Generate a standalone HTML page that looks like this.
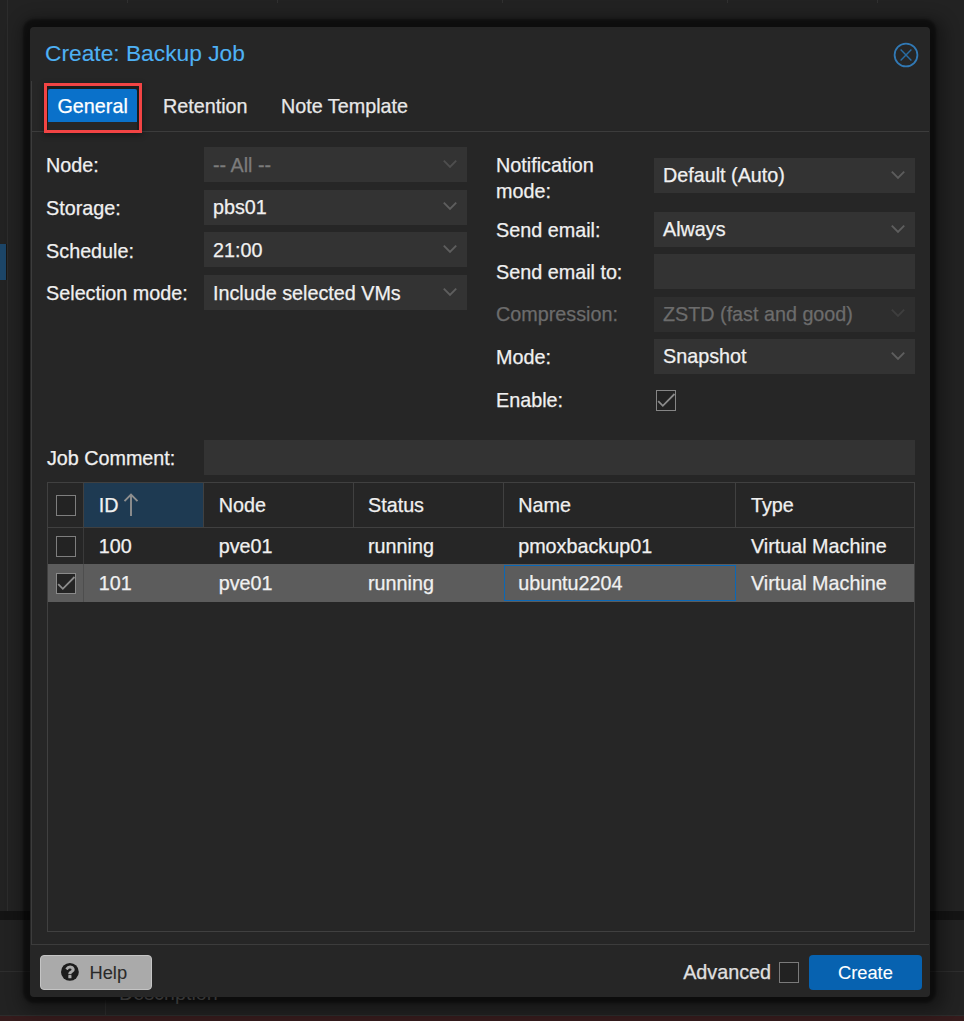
<!DOCTYPE html>
<html><head><meta charset="utf-8">
<style>
*{margin:0;padding:0;box-sizing:border-box}
html,body{width:964px;height:1021px;overflow:hidden;background:#222222;font-family:"Liberation Sans",sans-serif;}
.a{position:absolute}
svg.a{overflow:visible}
.t{position:absolute;font-size:19.75px;line-height:20px;color:#f0f0f0;white-space:nowrap;-webkit-text-stroke:0.25px currentColor}
</style></head><body>
<div class="a" style="left:7px;top:0px;width:1px;height:911px;background:#2c2c2c;"></div>
<div class="a" style="left:0px;top:244px;width:6px;height:36px;background:#1c4567;"></div>
<div class="a" style="left:6px;top:244px;width:1px;height:36px;background:#161616;"></div>
<div class="a" style="left:127px;top:0px;width:1px;height:3px;background:#303030;"></div>
<div class="a" style="left:277px;top:0px;width:1px;height:3px;background:#303030;"></div>
<div class="a" style="left:502px;top:0px;width:1px;height:3px;background:#303030;"></div>
<div class="a" style="left:727px;top:0px;width:1px;height:3px;background:#303030;"></div>
<div class="a" style="left:877px;top:0px;width:1px;height:3px;background:#303030;"></div>
<div class="a" style="left:0px;top:911px;width:964px;height:9px;background:#141414;"></div>
<div class="a" style="left:0px;top:971px;width:964px;height:1px;background:#2e2e2e;"></div>
<div class="a" style="left:105px;top:1000px;width:1px;height:16px;background:#2c2c2c;"></div>
<div class="a" style="left:0px;top:1015px;width:964px;height:1px;background:#2c2c2c;"></div>
<div class="a" style="left:0px;top:1016px;width:964px;height:5px;background:#351b1c;"></div>
<div class="a" style="left:30px;top:27px;width:900px;height:970px;border-radius:5px;box-shadow:-0.5px -1px 2.5px 6.5px rgba(0,0,0,0.45),3px 3px 16px 12px rgba(0,0,0,0.32)"></div>
<div class="t" style="left:119px;top:983px;color:#363636;-webkit-text-stroke:0">Description</div>
<div class="a" style="left:30px;top:27px;width:900px;height:970px;background:#262626;border-radius:4px"></div>
<div class="t" style="left:45px;top:41.6px;color:#4eb1f4;font-size:22.75px;line-height:23px;-webkit-text-stroke:0.1px #4eb1f4">Create: Backup Job</div>
<svg class="a" style="left:893px;top:42px" width="26" height="26" viewBox="0 0 26 26">
<circle cx="13" cy="13" r="11.4" fill="none" stroke="#3179b5" stroke-width="1.8"/>
<path d="M7.6 7.6 L18.4 18.4 M18.4 7.6 L7.6 18.4" fill="none" stroke="#286ca3" stroke-width="1.45"/>
</svg>
<div class="a" style="left:31px;top:81px;width:1px;height:864px;background:#3c3c3c;"></div>
<div class="a" style="left:31px;top:131px;width:898px;height:1px;background:#3c3c3c;"></div>
<div class="a" style="left:31px;top:944px;width:898px;height:1px;background:#3c3c3c;"></div>
<div class="a" style="left:44px;top:83px;width:98px;height:50px;border:3px solid #f24444;background:#1c1c1c;box-shadow:0 2px 6px rgba(0,0,0,0.4)"></div>
<div class="a" style="left:48px;top:89px;width:89px;height:41px;background:#262626;"></div>
<div class="a" style="left:48px;top:89px;width:89px;height:33px;background:#0a71ca;border-radius:2px 2px 0 0"></div>
<div class="t" style="left:57.5px;top:96px;color:#ffffff">General</div>
<div class="t" style="left:163px;top:96px;color:#e8e8e8">Retention</div>
<div class="t" style="left:281px;top:96px;color:#e8e8e8">Note Template</div>
<div class="a" style="left:204px;top:147px;width:263px;height:35px;background:#333333;"></div>
<div class="t" style="left:46.1px;top:155.2px">Node:</div>
<div class="t" style="left:213px;top:154.6px;color:#7c7c7c">-- All --</div>
<svg class="a" style="left:441.5px;top:157.7px" width="16" height="12" viewBox="0 0 16 12"><path d="M1.8 2.6 L8 8.8 L14.2 2.6" fill="none" stroke="#4e4e4e" stroke-width="1.9"/></svg>
<div class="a" style="left:204px;top:189.67px;width:263px;height:35px;background:#333333;"></div>
<div class="t" style="left:46.1px;top:197.86999999999998px">Storage:</div>
<div class="t" style="left:213px;top:197.26999999999998px">pbs01</div>
<svg class="a" style="left:441.5px;top:200.36999999999998px" width="16" height="12" viewBox="0 0 16 12"><path d="M1.8 2.6 L8 8.8 L14.2 2.6" fill="none" stroke="#5e5e5e" stroke-width="1.9"/></svg>
<div class="a" style="left:204px;top:232.33px;width:263px;height:35px;background:#333333;"></div>
<div class="t" style="left:46.1px;top:240.53px">Schedule:</div>
<div class="t" style="left:213px;top:239.93px">21:00</div>
<svg class="a" style="left:441.5px;top:243.03px" width="16" height="12" viewBox="0 0 16 12"><path d="M1.8 2.6 L8 8.8 L14.2 2.6" fill="none" stroke="#5e5e5e" stroke-width="1.9"/></svg>
<div class="a" style="left:204px;top:275px;width:263px;height:35px;background:#333333;"></div>
<div class="t" style="left:46.1px;top:283.2px">Selection mode:</div>
<div class="t" style="left:213px;top:282.6px">Include selected VMs</div>
<svg class="a" style="left:441.5px;top:285.7px" width="16" height="12" viewBox="0 0 16 12"><path d="M1.8 2.6 L8 8.8 L14.2 2.6" fill="none" stroke="#5e5e5e" stroke-width="1.9"/></svg>
<div class="t" style="left:496.1px;top:155px">Notification</div>
<div class="t" style="left:496.1px;top:180.8px">mode:</div>
<div class="a" style="left:654px;top:158px;width:261px;height:35px;background:#333333;"></div>
<div class="t" style="left:663px;top:165.3px">Default (Auto)</div>
<svg class="a" style="left:889.5px;top:168.7px" width="16" height="12" viewBox="0 0 16 12"><path d="M1.8 2.6 L8 8.8 L14.2 2.6" fill="none" stroke="#5c5c5c" stroke-width="1.9"/></svg>
<div class="a" style="left:654px;top:212px;width:261px;height:35px;background:#333333;"></div>
<div class="t" style="left:496.1px;top:219.5px">Send email:</div>
<div class="t" style="left:663px;top:219.0px">Always</div>
<svg class="a" style="left:889.5px;top:222.7px" width="16" height="12" viewBox="0 0 16 12"><path d="M1.8 2.6 L8 8.8 L14.2 2.6" fill="none" stroke="#5e5e5e" stroke-width="1.9"/></svg>
<div class="a" style="left:654px;top:254.33px;width:261px;height:35px;background:#333333;"></div>
<div class="t" style="left:496.1px;top:261.83000000000004px">Send email to:</div>
<div class="a" style="left:654px;top:296.67px;width:261px;height:35px;background:#2e2e2e;"></div>
<div class="t" style="left:496.1px;top:304.17px;color:#6c6c6c">Compression:</div>
<div class="t" style="left:663px;top:303.67px;color:#6c6c6c">ZSTD (fast and good)</div>
<svg class="a" style="left:889.5px;top:307.37px" width="16" height="12" viewBox="0 0 16 12"><path d="M1.8 2.6 L8 8.8 L14.2 2.6" fill="none" stroke="#3e3e3e" stroke-width="1.9"/></svg>
<div class="a" style="left:654px;top:339px;width:261px;height:35px;background:#333333;"></div>
<div class="t" style="left:496.1px;top:346.5px">Mode:</div>
<div class="t" style="left:663px;top:346.0px">Snapshot</div>
<svg class="a" style="left:889.5px;top:349.7px" width="16" height="12" viewBox="0 0 16 12"><path d="M1.8 2.6 L8 8.8 L14.2 2.6" fill="none" stroke="#5e5e5e" stroke-width="1.9"/></svg>
<div class="t" style="left:496.1px;top:389.7px">Enable:</div>
<div class="a" style="left:655.5px;top:390px;width:20px;height:21px;border:1.5px solid #858585;background:#222222"></div>
<svg class="a" style="left:655.5px;top:390px" width="21" height="21" viewBox="0 0 21 21"><path d="M2.2 11.2 L6.8 15.8 L18.5 4" fill="none" stroke="#8a8a8a" stroke-width="1.8"/></svg>
<div class="t" style="left:46.9px;top:448px">Job Comment:</div>
<div class="a" style="left:204px;top:440px;width:711px;height:35px;background:#333333;"></div>
<div class="a" style="left:47px;top:482px;width:868px;height:450px;border:1px solid #404040"></div>
<div class="a" style="left:84px;top:483px;width:120px;height:44px;background:#1e3a52;"></div>
<div class="a" style="left:48px;top:527px;width:866px;height:1px;background:#404040;"></div>
<div class="a" style="left:83px;top:483px;width:1px;height:44px;background:#404040;"></div>
<div class="a" style="left:203px;top:483px;width:1px;height:44px;background:#404040;"></div>
<div class="a" style="left:353px;top:483px;width:1px;height:44px;background:#404040;"></div>
<div class="a" style="left:503px;top:483px;width:1px;height:44px;background:#404040;"></div>
<div class="a" style="left:735px;top:483px;width:1px;height:44px;background:#404040;"></div>
<div class="a" style="left:48px;top:564px;width:866px;height:38px;background:#5c5c5c;"></div>
<div class="a" style="left:83px;top:528px;width:1px;height:36px;background:#3a3a3a;"></div>
<div class="a" style="left:83px;top:564px;width:1px;height:38px;background:#4e4e4e;"></div>
<div class="a" style="left:504px;top:565px;width:232px;height:36px;border:1px solid #0b68b6"></div>
<div class="a" style="left:55.5px;top:495px;width:20px;height:21px;border:1.5px solid #7e7e7e;background:#232323"></div>
<div class="a" style="left:55.5px;top:536px;width:20px;height:21px;border:1.5px solid #7e7e7e;background:#232323"></div>
<div class="a" style="left:55.5px;top:573px;width:20px;height:21px;border:1.5px solid #8a8a8a;background:#242424"></div>
<svg class="a" style="left:55.5px;top:573px" width="21" height="21" viewBox="0 0 21 21"><path d="M2.2 11.2 L6.8 15.8 L18.5 4" fill="none" stroke="#8c8c8c" stroke-width="1.8"/></svg>
<div class="t" style="left:98.75px;top:495px">ID</div>
<div class="t" style="left:218.7px;top:495px">Node</div>
<div class="t" style="left:368px;top:495px">Status</div>
<div class="t" style="left:518.2px;top:495px">Name</div>
<div class="t" style="left:751px;top:495px">Type</div>
<svg class="a" style="left:120px;top:490px" width="24" height="30" viewBox="0 0 24 30">
<path d="M11 4.5 L11 26 M4.5 11.2 L11 4.6 L17.5 11.2" fill="none" stroke="#8f8f8f" stroke-width="1.9"/>
</svg>
<div class="t" style="left:98.75px;top:535.5px">100</div>
<div class="t" style="left:218.7px;top:535.5px">pve01</div>
<div class="t" style="left:368px;top:535.5px">running</div>
<div class="t" style="left:518.2px;top:535.5px">pmoxbackup01</div>
<div class="t" style="left:751px;top:535.5px">Virtual Machine</div>
<div class="t" style="left:98.75px;top:572.6px">101</div>
<div class="t" style="left:218.7px;top:572.6px">pve01</div>
<div class="t" style="left:368px;top:572.6px">running</div>
<div class="t" style="left:518.2px;top:572.6px">ubuntu2204</div>
<div class="t" style="left:751px;top:572.6px">Virtual Machine</div>
<div class="a" style="left:40px;top:955px;width:112px;height:35px;background:#aaaaaa;border:1px solid #c4c4c4;border-radius:4px"></div>
<svg class="a" style="left:61px;top:963.3px" width="17.8" height="17.8" viewBox="0 128 1536 1536">
<circle cx="768" cy="896" r="768" fill="#1c1c1c"/>
<path fill="#aaaaaa" transform="translate(768 896) scale(1.07) translate(-768 -896)" d="M896 1376v-192q0-14-9-23t-23-9h-192q-14 0-23 9t-9 23v192q0 14 9 23t23 9h192q14 0 23-9t9-23zm256-672q0-88-55.5-163t-138.5-116-170-41q-243 0-371 213-15 24 8 42l132 100q7 6 19 6 16 0 25-12 53-68 86-92 34-24 86-24 48 0 85.5 26t37.5 59q0 38-20 61t-68 45q-63 28-115.5 86.5t-52.5 125.5v36q0 14 9 23t23 9h192q14 0 23-9t9-23q0-19 21.5-49.5t54.5-49.5q32-18 49-28.5t46-35 44.5-48 28-60.5 12.5-81z"/>
</svg>
<div class="t" style="left:89.5px;top:962.8px;color:#2a2a2a;font-size:18.3px;-webkit-text-stroke:0.1px #2a2a2a">Help</div>
<div class="t" style="left:683.2px;top:961.5px;color:#e0e0e0">Advanced</div>
<div class="a" style="left:778.5px;top:962px;width:20px;height:21px;border:1.5px solid #7a7a7a;background:#222222"></div>
<div class="a" style="left:809px;top:955px;width:113px;height:35px;background:#0762b0;border-radius:4px"></div>
<div class="t" style="left:838px;top:962.8px;color:#ffffff;font-size:18.3px;-webkit-text-stroke:0.1px #fff">Create</div>
</body></html>
